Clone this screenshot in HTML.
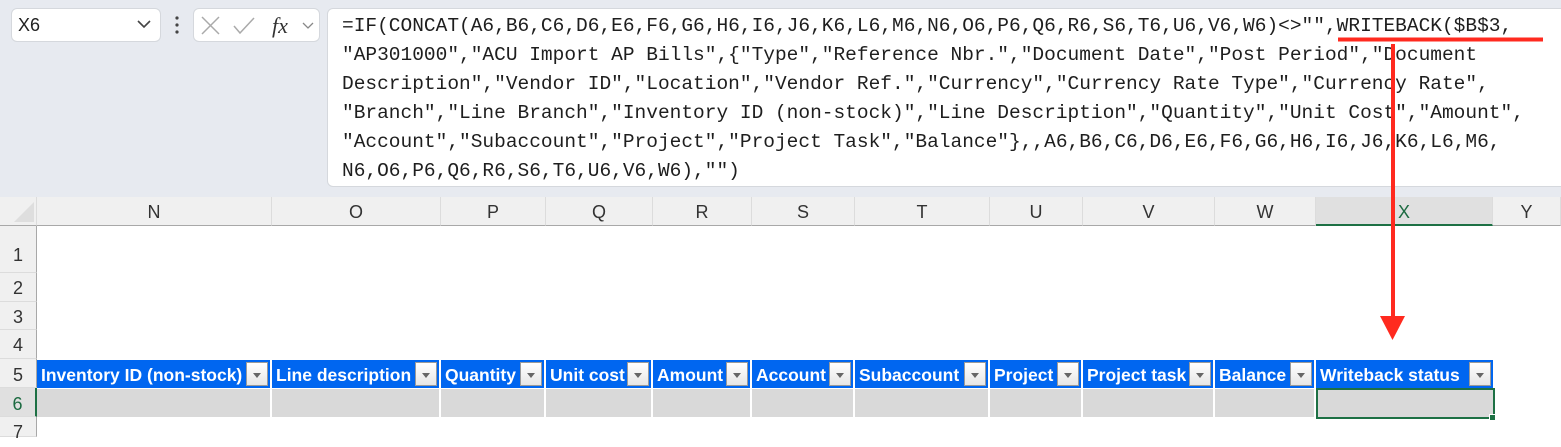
<!DOCTYPE html>
<html><head><meta charset="utf-8"><style>
*{margin:0;padding:0;box-sizing:border-box}
body{width:1561px;height:430px;overflow:hidden;background:#fff;font-family:"Liberation Sans",sans-serif;position:relative}
.top{position:absolute;left:0;top:0;width:1561px;height:197px;background:#e7eaf0}
.box{position:absolute;background:#fff;border:1px solid #d5d8dd;border-radius:6px}
.fml{position:absolute;left:342px;top:12px;font-family:"Liberation Mono",monospace;font-size:19.5px;line-height:29px;color:#1e1e1e;white-space:pre}
.ch{position:absolute;top:197px;height:29px;background:#f0f0f0;border-bottom:1px solid #a8a8a8;border-right:1px solid #dcdcdc;color:#333;font-size:18px;text-align:center;line-height:30px}
.rh{position:absolute;left:0;width:37px;background:#f0f0f0;border-right:1px solid #a8a8a8;border-bottom:1px solid #dcdcdc;color:#333;font-size:18px;text-align:center}
.hd{position:absolute;top:360px;height:28px;background:#0066f0;color:#fff;font-weight:bold;font-size:17.5px;line-height:31px;padding-left:4px;border-right:2px solid #fff;white-space:nowrap;overflow:hidden}
.dd{position:absolute;right:2px;top:2px;width:22px;height:24px;background:linear-gradient(#fff,#e6e6e6);border:1px solid #9a9a9a}
.dd:after{content:"";position:absolute;left:6px;top:10px;border-left:4px solid transparent;border-right:4px solid transparent;border-top:5px solid #666}
.dc{position:absolute;top:389px;height:28px;background:#d9d9d9;border-right:2px solid #fff}
</style></head><body>
<div class="top"></div>
<div class="box" style="left:11px;top:8px;width:150px;height:34px"></div>
<div style="position:absolute;left:18px;top:15px;font-size:18px;color:#222">X6</div>
<svg style="position:absolute;left:136px;top:19px" width="16" height="10"><path d="M2 2l6 6 6-6" stroke="#444" stroke-width="1.6" fill="none"/></svg>
<svg style="position:absolute;left:174px;top:15px" width="6" height="22"><circle cx="3" cy="3" r="1.6" fill="#444"/><circle cx="3" cy="10" r="1.6" fill="#444"/><circle cx="3" cy="17" r="1.6" fill="#444"/></svg>
<div class="box" style="left:193px;top:8px;width:127px;height:34px"></div>
<svg style="position:absolute;left:200px;top:14px" width="118" height="24"><path d="M2 3l17 17M19 3L2 20" stroke="#aaa" stroke-width="1.5"/><path d="M34 12l6 7 14-15" stroke="#aaa" stroke-width="1.5" fill="none"/><text x="72" y="19" font-family="Liberation Serif" font-style="italic" font-size="22" fill="#333">fx</text><path d="M103 9l5 5 5-5" stroke="#888" stroke-width="1.3" fill="none"/></svg>
<div class="box" style="left:327px;top:8px;width:1245px;height:179px"></div>
<div class="fml">=IF(CONCAT(A6,B6,C6,D6,E6,F6,G6,H6,I6,J6,K6,L6,M6,N6,O6,P6,Q6,R6,S6,T6,U6,V6,W6)&lt;&gt;"",WRITEBACK($B$3,
"AP301000","ACU Import AP Bills",{"Type","Reference Nbr.","Document Date","Post Period","Document
Description","Vendor ID","Location","Vendor Ref.","Currency","Currency Rate Type","Currency Rate",
"Branch","Line Branch","Inventory ID (non-stock)","Line Description","Quantity","Unit Cost","Amount",
"Account","Subaccount","Project","Project Task","Balance"},,A6,B6,C6,D6,E6,F6,G6,H6,I6,J6,K6,L6,M6,
N6,O6,P6,Q6,R6,S6,T6,U6,V6,W6),"")</div>

<div class="ch" style="left:0;width:37px"><svg style="position:absolute;left:13px;top:5px" width="22" height="20"><path d="M21 0V20H1z" fill="#dedede"/></svg></div>
<div class="ch" style="left:37px;width:235px">N</div>
<div class="ch" style="left:272px;width:169px">O</div>
<div class="ch" style="left:441px;width:105px">P</div>
<div class="ch" style="left:546px;width:107px">Q</div>
<div class="ch" style="left:653px;width:99px">R</div>
<div class="ch" style="left:752px;width:103px">S</div>
<div class="ch" style="left:855px;width:135px">T</div>
<div class="ch" style="left:990px;width:93px">U</div>
<div class="ch" style="left:1083px;width:132px">V</div>
<div class="ch" style="left:1215px;width:101px">W</div>
<div class="ch" style="left:1316px;width:177px;background:#e0e0e0;color:#1d6b42;border-bottom:2px solid #1d7044">X</div>
<div class="ch" style="left:1493px;width:68px">Y</div>

<div class="rh" style="top:226px;height:47px;line-height:58px">1</div>
<div class="rh" style="top:273px;height:29px;line-height:30px">2</div>
<div class="rh" style="top:302px;height:28px;line-height:30px">3</div>
<div class="rh" style="top:330px;height:29px;line-height:30px">4</div>
<div class="rh" style="top:359px;height:29px;line-height:32px">5</div>
<div class="rh" style="top:388px;height:29px;line-height:32px;background:#e0e0e0;color:#1d6b42;border-right:2px solid #1d7044">6</div>
<div class="rh" style="top:417px;height:20px;line-height:30px">7</div>

<div class="hd" style="left:37px;width:235px">Inventory ID (non-stock)<div class="dd"></div></div>
<div class="hd" style="left:272px;width:169px">Line description<div class="dd"></div></div>
<div class="hd" style="left:441px;width:105px">Quantity<div class="dd"></div></div>
<div class="hd" style="left:546px;width:107px">Unit cost<div class="dd"></div></div>
<div class="hd" style="left:653px;width:99px">Amount<div class="dd"></div></div>
<div class="hd" style="left:752px;width:103px">Account<div class="dd"></div></div>
<div class="hd" style="left:855px;width:135px">Subaccount<div class="dd"></div></div>
<div class="hd" style="left:990px;width:93px">Project<div class="dd"></div></div>
<div class="hd" style="left:1083px;width:132px">Project task<div class="dd"></div></div>
<div class="hd" style="left:1215px;width:101px">Balance<div class="dd"></div></div>
<div class="hd" style="left:1316px;width:177px;border-right:none">Writeback status<div class="dd"></div></div>

<div class="dc" style="left:37px;width:235px"></div>
<div class="dc" style="left:272px;width:169px"></div>
<div class="dc" style="left:441px;width:105px"></div>
<div class="dc" style="left:546px;width:107px"></div>
<div class="dc" style="left:653px;width:99px"></div>
<div class="dc" style="left:752px;width:103px"></div>
<div class="dc" style="left:855px;width:135px"></div>
<div class="dc" style="left:990px;width:93px"></div>
<div class="dc" style="left:1083px;width:132px"></div>
<div class="dc" style="left:1215px;width:101px"></div>
<div class="dc" style="left:1316px;width:179px;border:2px solid #1d7044;top:388px;height:31px"></div>
<div style="position:absolute;left:1489px;top:414px;width:7px;height:7px;background:#1d7044;border:1px solid #fff"></div>

<svg style="position:absolute;left:0;top:0" width="1561" height="430"><path d="M1338 39.5H1543" stroke="#ff2a1f" stroke-width="4"/><path d="M1393 44V318" stroke="#ff2a1f" stroke-width="4"/><path d="M1380 316H1405L1392.5 340z" fill="#ff2a1f"/></svg>
</body></html>
